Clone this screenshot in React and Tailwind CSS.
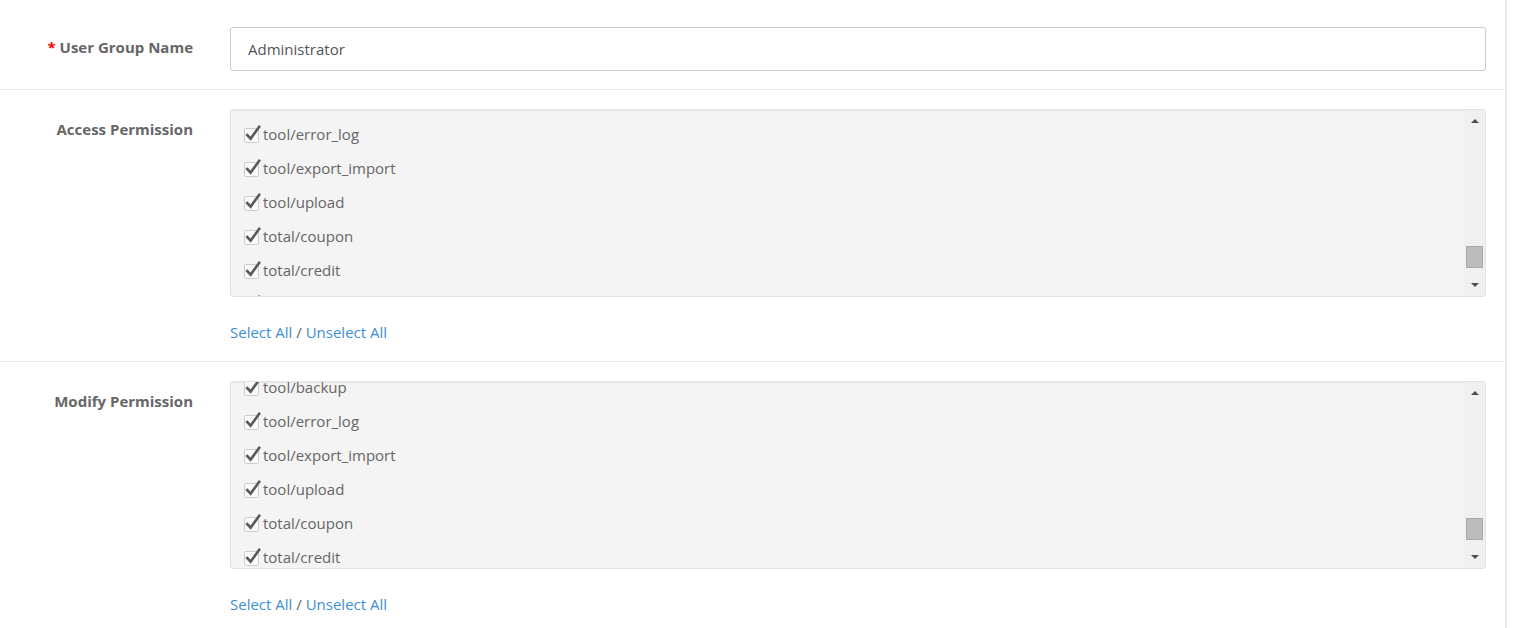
import React from "react";

const accessItems = [
  "tool/backup",
  "tool/error_log",
  "tool/export_import",
  "tool/upload",
  "total/coupon",
  "total/credit",
  "total/handling",
];

const CheckIcon = () => (
  <svg width="18" height="18" viewBox="0 0 18 18" className="shrink-0">
    <rect x="1.5" y="3.5" width="14" height="14" rx="1" fill="#fafafa" stroke="#cdcdcd" />
    <path d="M4.2 10 L7.6 13.6 L16.2 1.8" fill="none" stroke="#5a5a5a" strokeWidth="2.6" strokeLinecap="square" />
  </svg>
);

const FakeScrollbar = ({ thumbTop }) => (
  <div className="w-[21px] shrink-0 bg-[#f0f0f0] flex flex-col items-center">
    <div className="h-[16px] flex items-center justify-center pt-[6px]">
      <span className="w-0 h-0 border-l-[4px] border-r-[4px] border-b-[4px] border-l-transparent border-r-transparent border-b-[#505050]" />
    </div>
    <div className="flex-1 w-full px-[2px]">
      <div style={{ marginTop: thumbTop }} className="h-[22px] w-full bg-[#bcbcbc] border border-[#a8a8a8]" />
    </div>
    <div className="h-[16px] flex items-center justify-center pb-[6px]">
      <span className="w-0 h-0 border-l-[4px] border-r-[4px] border-t-[4px] border-l-transparent border-r-transparent border-t-[#505050]" />
    </div>
  </div>
);

const PermissionBox = ({ offset, thumbTop }) => (
  <div className="h-[188px] flex bg-[#f4f4f4] border border-[#e3e3e3] rounded-[3px] shadow-[inset_0_1px_1px_rgba(0,0,0,0.05)] overflow-hidden">
    <div className="flex-1 overflow-hidden">
      <div style={{ marginTop: offset }}>
        {accessItems.map((item) => (
          <div key={item} className="h-[34px] flex items-center pl-[12px] gap-[2px]">
            <CheckIcon />
            <span className="text-[15px] text-[#666]">{item}</span>
          </div>
        ))}
      </div>
    </div>
    <FakeScrollbar thumbTop={thumbTop} />
  </div>
);

const Label = ({ children, required }) => (
  <div className="w-[230px] shrink-0 pr-[37px] pt-[10px] text-right text-[15px] leading-[20px] font-bold text-[#666]">
    {required && <span className="text-[#f00]">* </span>}
    {children}
  </div>
);

const SelectLinks = () => (
  <div className="mt-[25px] text-[15px] leading-[20px] text-[#666]">
    <a className="text-[#3d8fd1]">Select All</a> / <a className="text-[#3d8fd1]">Unselect All</a>
  </div>
);

export default function App() {
  return (
    <div className="bg-white min-h-screen font-['Open_Sans',sans-serif]">
      <div className="w-[1507px] border-r-[2px] border-[#ebebeb] min-h-[628px]">
        {/* user group name */}
        <div className="flex pt-[27px] pb-[18px] border-b border-[#ebebeb]">
          <Label required>User Group Name</Label>
          <div className="flex-1 pr-[19px]">
            <div className="h-[44px] border border-[#cccccc] rounded-[3px] flex items-center px-[17px] text-[15px] text-[#555]">
              Administrator
            </div>
          </div>
        </div>

        {/* access */}
        <div className="flex pt-[19px] pb-[19px] border-b border-[#ebebeb]">
          <Label>Access Permission</Label>
          <div className="flex-1 pr-[19px]">
            <PermissionBox offset={-27} thumbTop={120} />
            <SelectLinks />
          </div>
        </div>

        {/* modify */}
        <div className="flex pt-[19px] pb-[19px]">
          <Label>Modify Permission</Label>
          <div className="flex-1 pr-[19px]">
            <PermissionBox offset={-12} thumbTop={120} />
            <SelectLinks />
          </div>
        </div>
      </div>
    </div>
  );
}
